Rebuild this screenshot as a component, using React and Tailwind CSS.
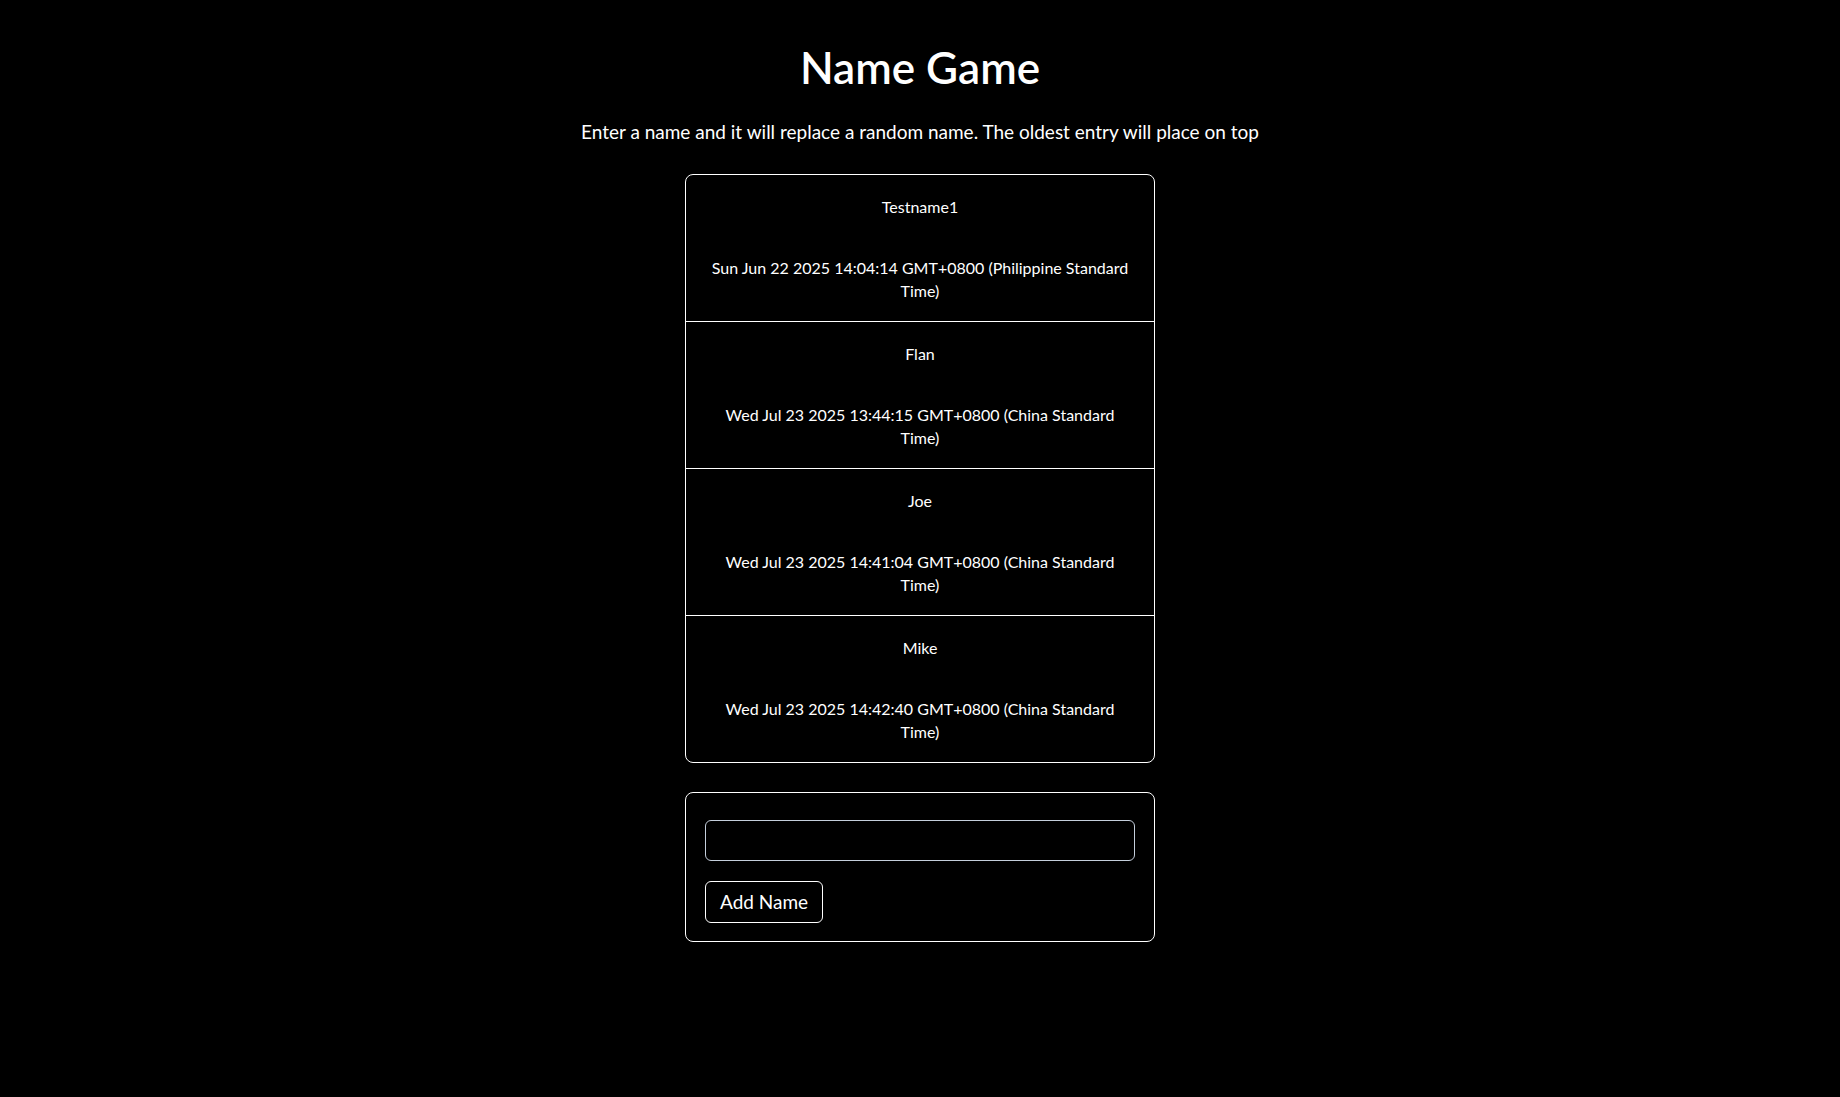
import React, { useState } from 'react';

const initialEntries = [
    { name: 'Testname1', date: 'Sun Jun 22 2025 14:04:14 GMT+0800 (Philippine Standard Time)' },
    { name: 'Flan', date: 'Wed Jul 23 2025 13:44:15 GMT+0800 (China Standard Time)' },
    { name: 'Joe', date: 'Wed Jul 23 2025 14:41:04 GMT+0800 (China Standard Time)' },
    { name: 'Mike', date: 'Wed Jul 23 2025 14:42:40 GMT+0800 (China Standard Time)' },
];

const App = () => {
    const [entries] = useState(initialEntries);
    const [value, setValue] = useState('');

    return (
        <div className="min-h-screen w-full bg-black text-white font-['Segoe_UI',Lato,sans-serif] pt-[41px] flex flex-col items-center">
            <h1 className="text-[44px] leading-[52px] font-semibold">Name Game</h1>
            <p className="mt-[25px] text-[19px] leading-[27px]">
                Enter a name and it will replace a random name. The oldest entry will place on top
            </p>

            <div className="mt-[29px] w-[470px] border border-white rounded-[8px]">
                {entries.map((entry, i) => (
                    <div
                        key={entry.name}
                        className={`px-[20px] pt-[20px] pb-[19px] text-center text-[16px] leading-[23px] ${i > 0 ? 'border-t border-white' : ''}`}
                    >
                        <p>{entry.name}</p>
                        <p className="mt-[38px]">{entry.date}</p>
                    </div>
                ))}
            </div>

            <div className="mt-[29px] w-[470px] border border-white rounded-[8px] px-[19px] pt-[27px] pb-[18px] flex flex-col items-start gap-[20px]">
                <input
                    value={value}
                    onChange={(e) => setValue(e.target.value)}
                    className="w-full h-[41px] bg-black border border-[#c5cfdc] rounded-[6px] px-3 text-white outline-none"
                />
                <button className="h-[42px] px-[14px] border border-white rounded-[6px] text-[19px]">
                    Add Name
                </button>
            </div>
        </div>
    );
};

export default App;
